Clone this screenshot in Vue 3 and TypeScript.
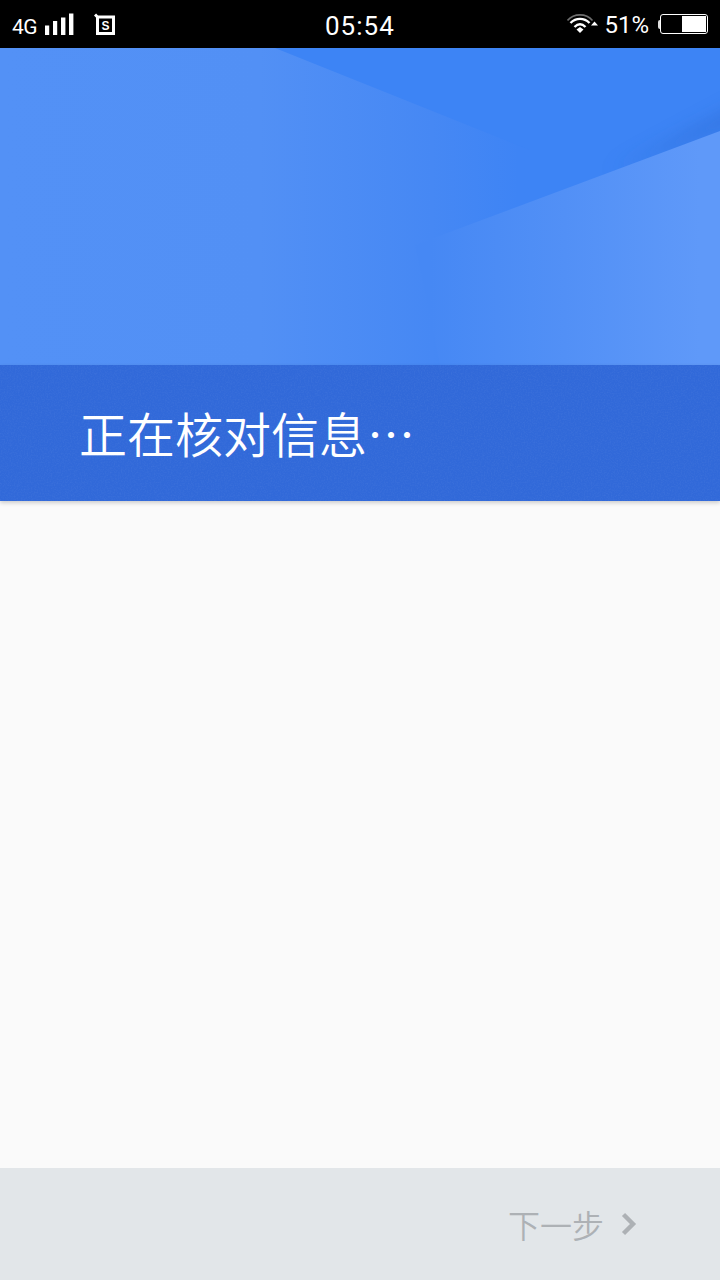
<script setup lang="ts">
const title = '正在核对信息…'
</script>

<template>
  <div class="page">
    <div class="status">
      <div class="st-left">
        <span class="net">4G</span>
        <svg class="signal" width="29" height="24" viewBox="0 0 29 24">
          <rect x="0" y="12.5" width="4.2" height="9.5" fill="#fff" />
          <rect x="8" y="8" width="4.2" height="14" fill="#fff" />
          <rect x="16" y="4.5" width="4.4" height="17.5" fill="#fff" />
          <rect x="24" y="0.5" width="4.4" height="21.5" fill="#fff" />
        </svg>
        <svg class="sim" width="22" height="24" viewBox="0 0 22 24">
          <path d="M1 1.5 L3.5 4 H19.5 V20.5 H3.5 V4" fill="none" stroke="#fff" stroke-width="3" />
          <text x="11.5" y="16.5" text-anchor="middle" class="sim-s">S</text>
        </svg>
      </div>
      <div class="clock">05:54</div>
      <div class="st-right">
        <svg class="wifi" width="31" height="24" viewBox="0 0 31 24">
          <path d="M0.5 8.5 C7 1 19 1 25.5 8.5" fill="none" stroke="#6e6e6e" stroke-width="1.6" />
          <path d="M3.5 11 C9 5.5 17 5.5 22.5 11" fill="none" stroke="#fff" stroke-width="2.4" />
          <path d="M7.5 15 C11 11.5 15 11.5 18.5 15" fill="none" stroke="#fff" stroke-width="2.4" />
          <path d="M9.5 17.5 L13 15 L16.5 17.5 L13 21 Z" fill="#fff" />
          <path d="M24 13.5 L27.5 9.5 L31 13.5 Z" fill="#fff" />
        </svg>
        <span class="pct">51%</span>
        <span class="batt-tip"></span>
        <span class="batt"><span class="batt-fill"></span></span>
      </div>
    </div>

    <div class="hero">
      <svg class="art" viewBox="0 0 720 317" preserveAspectRatio="none">
        <defs>
          <linearGradient id="bg" gradientUnits="userSpaceOnUse" x1="0" y1="0" x2="720" y2="0">
            <stop offset="0" stop-color="#5391f6" />
            <stop offset="0.36" stop-color="#5290f5" />
            <stop offset="0.6" stop-color="#4688f4" />
            <stop offset="0.72" stop-color="#3e84f5" />
            <stop offset="1" stop-color="#3d84f5" />
          </linearGradient>
          <linearGradient id="low" gradientUnits="userSpaceOnUse" x1="430" y1="0" x2="700" y2="0">
            <stop offset="0" stop-color="#4688f4" />
            <stop offset="0.5" stop-color="#5290f6" />
            <stop offset="1" stop-color="#5f99f9" />
          </linearGradient>
          <filter id="soft" x="-30%" y="-60%" width="160%" height="220%">
            <feGaussianBlur stdDeviation="9" />
          </filter>
        </defs>
        <rect width="720" height="317" fill="url(#bg)" />
        <polygon points="275,0 720,0 720,200 530,200 530,102" fill="#3d84f5" />
        <polygon points="740,76 740,55 610,124" fill="#2a68d0" opacity="0.5" filter="url(#soft)" />
        <polygon points="720,83 720,317 440,317 415,197" fill="url(#low)" />
      </svg>
    </div>

    <div class="band">
      <svg class="grain" width="720" height="136" aria-hidden="true">
        <filter id="speck">
          <feTurbulence type="fractalNoise" baseFrequency="0.7" numOctaves="2" seed="4" />
          <feColorMatrix type="matrix" values="0 0 0 0 1  0 0 0 0 1  0 0 0 0 1  0 0 0 0.9 -0.35" />
        </filter>
        <rect width="720" height="136" filter="url(#speck)" opacity="0.1" />
      </svg>
      <h1 class="title">{{ title }}</h1>
    </div>

    <main class="body"></main>

    <footer class="foot">
      <span class="next">下一步</span>
      <svg class="chev" width="18" height="26" viewBox="0 0 18 26">
        <path d="M3.5 3.5 L13 13 L3.5 22.5" fill="none" stroke="#adb1b5" stroke-width="4.4" />
      </svg>
    </footer>
  </div>
</template>

<style scoped>
.page {
  width: 720px;
  height: 1280px;
  display: flex;
  flex-direction: column;
  background: #fafafa;
  font-family: "Noto Sans CJK SC", "Noto Sans", sans-serif;
  overflow: hidden;
}
.status {
  height: 48px;
  flex: none;
  background: #000;
  color: #fff;
  display: flex;
  align-items: center;
  justify-content: space-between;
  position: relative;
  font-family: Roboto, "Liberation Sans", sans-serif;
}
.st-left {
  display: flex;
  align-items: center;
  padding-left: 12px;
}
.net {
  font-size: 21px;
  line-height: 24px;
  margin-top: 5px;
  letter-spacing: -0.6px;
  width: 33px;
}
.signal {
  margin-top: 1px;
}
.sim {
  margin-left: 20px;
  margin-top: 1px;
}
.sim-s {
  font-size: 12px;
  font-weight: 700;
  fill: #fff;
  font-family: "Liberation Sans", sans-serif;
}
.clock {
  position: absolute;
  left: 325px;
  top: 10px;
  font-size: 26px;
  line-height: 32px;
  letter-spacing: 1px;
}
.st-right {
  display: flex;
  align-items: center;
  padding-right: 12px;
}
.wifi {
  margin-right: 6px;
}
.pct {
  font-size: 24px;
  line-height: 28px;
  margin-right: 9px;
  margin-top: 2px;
}
.batt-tip {
  width: 2px;
  height: 9px;
  background: #ddd;
  border-radius: 2px 0 0 2px;
}
.batt {
  width: 44px;
  height: 16px;
  border: 1px solid #fff;
  border-radius: 3px;
  padding: 1px;
  display: flex;
  justify-content: flex-end;
  box-sizing: content-box;
}
.batt-fill {
  width: 24px;
  background: #fff;
}
.hero {
  height: 317px;
  flex: none;
}
.art {
  display: block;
  width: 720px;
  height: 317px;
}
.band {
  height: 136px;
  flex: none;
  background: #3169d9;
  box-shadow: 0 2px 4px rgba(0, 0, 0, 0.18);
  display: flex;
  align-items: center;
  padding-left: 79px;
  position: relative;
}
.grain {
  position: absolute;
  left: 0;
  top: 0;
}
.title {
  position: relative;
  margin: -3px 0 0;
  font-size: 48px;
  line-height: 64px;
  font-weight: 350;
  color: #fff;
}
.body {
  flex: 1;
}
.foot {
  height: 112px;
  flex: none;
  background: #e2e6e9;
  display: flex;
  align-items: center;
  justify-content: flex-end;
  padding-right: 82px;
}
.next {
  font-size: 32px;
  line-height: 40px;
  font-weight: 350;
  color: #adb1b5;
  margin-right: 16px;
}
.chev {
  flex: none;
}
</style>

<style>
html, body {
  margin: 0;
  background: #fafafa;
}
</style>
